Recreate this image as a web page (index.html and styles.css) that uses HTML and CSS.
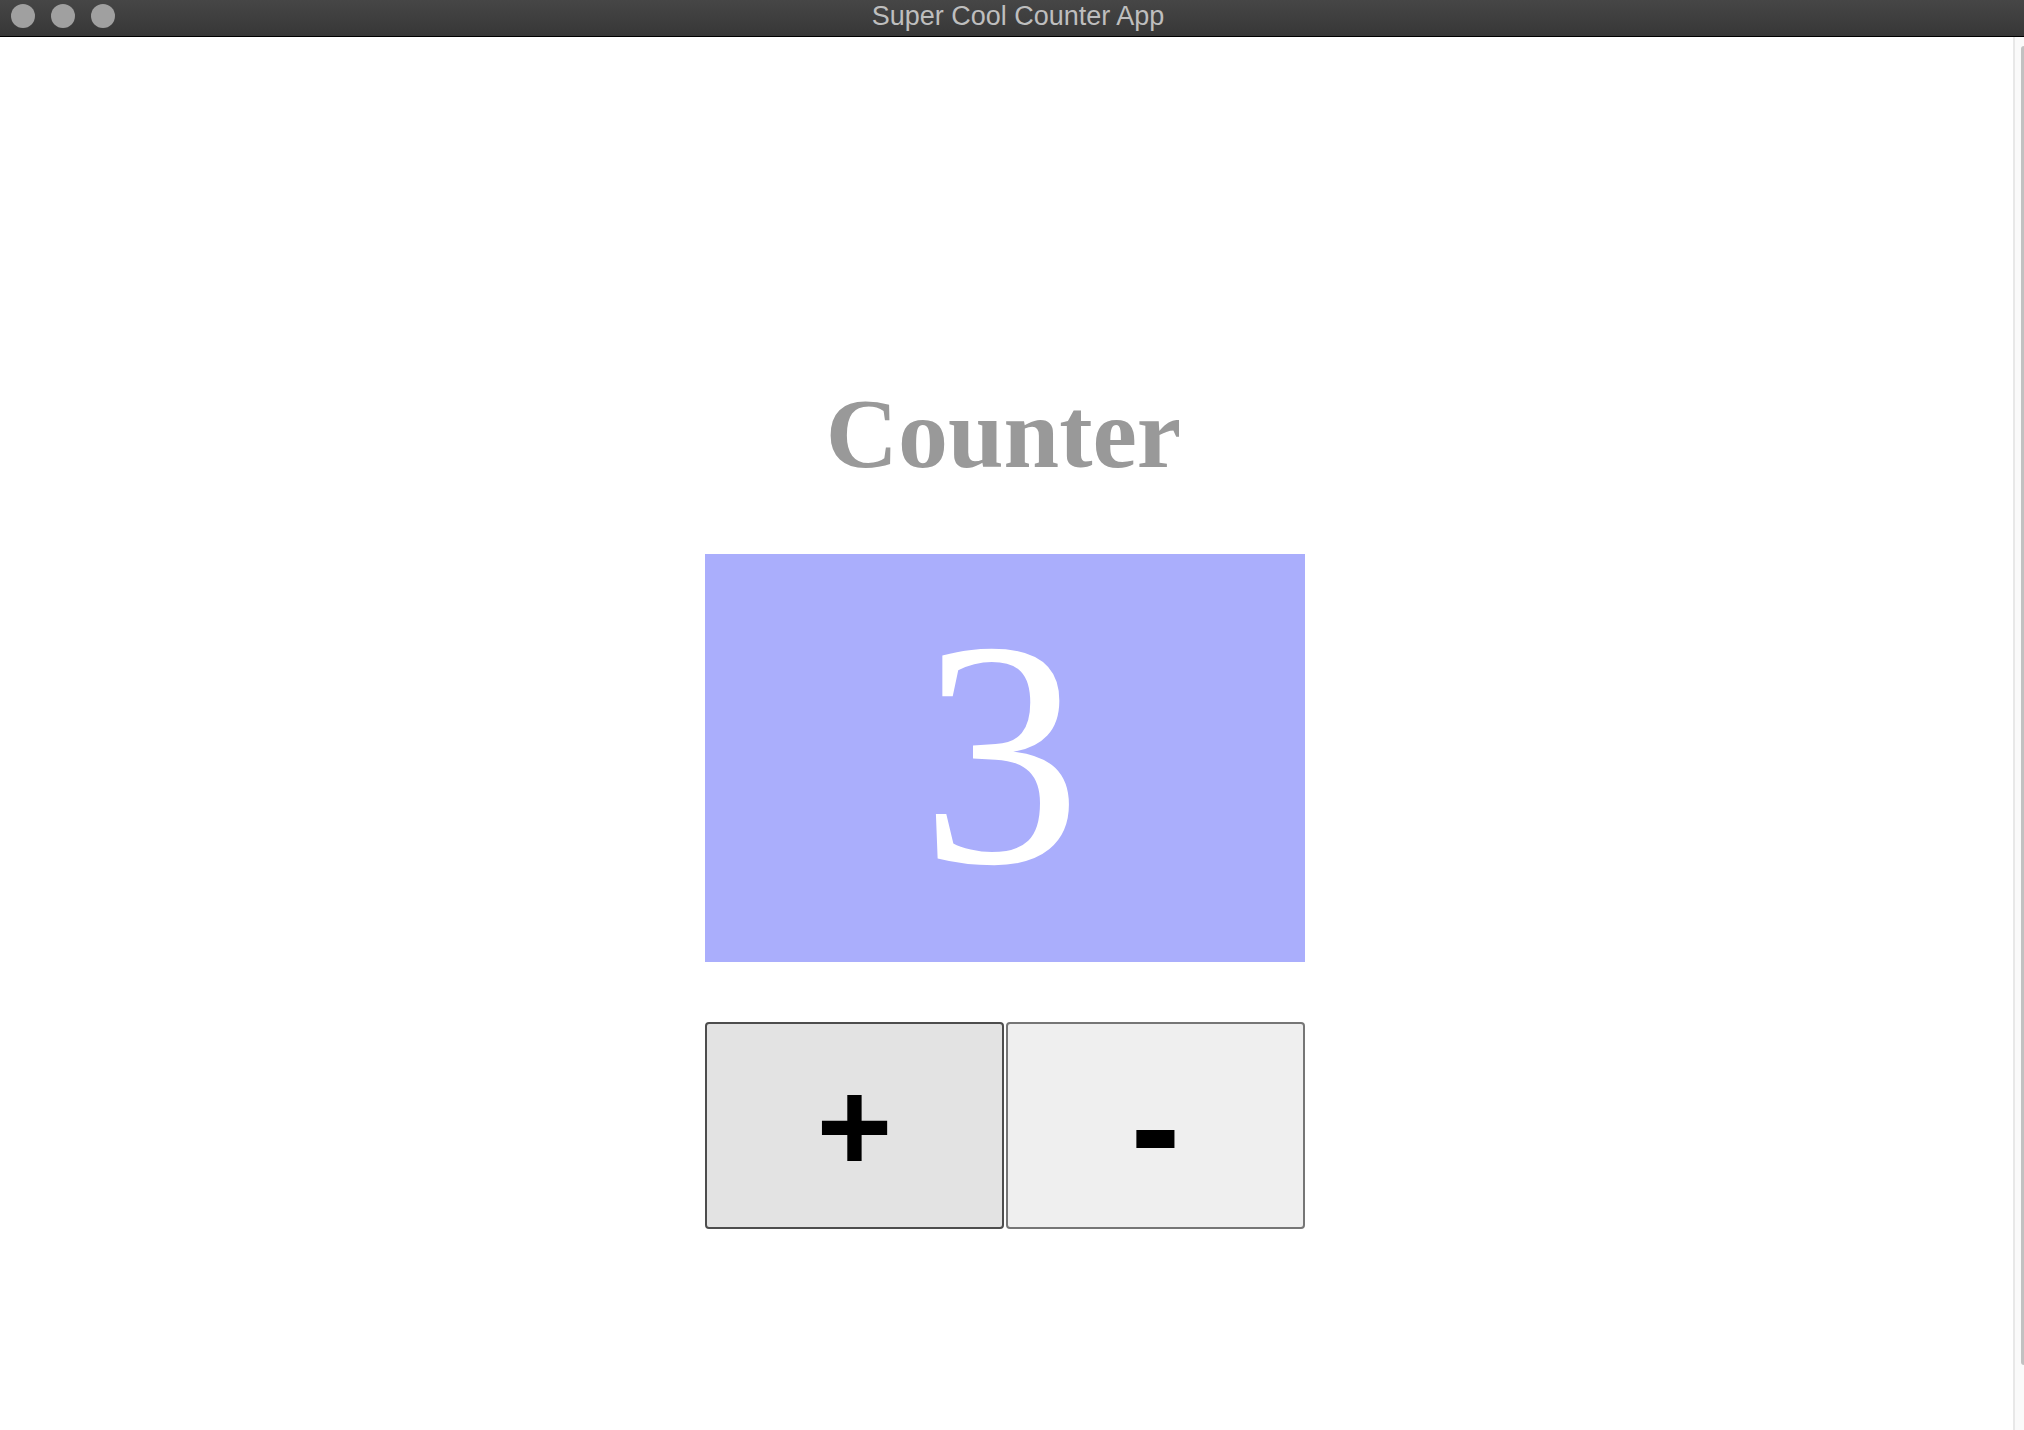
FILE: index.html
```html
<!DOCTYPE html>
<html lang="en">
<head>
<meta charset="utf-8">
<title>Super Cool Counter App</title>
<link rel="stylesheet" href="styles.css">
</head>
<body>
<div class="window">
  <header class="titlebar">
    <div class="lights">
      <span class="light"></span>
      <span class="light"></span>
      <span class="light"></span>
    </div>
    <div class="title">Super Cool Counter App</div>
  </header>
  <div class="viewport">
    <main class="content">
      <h1 class="heading">Counter</h1>
      <div class="counter">
        <div class="display">3</div>
        <div class="buttons">
          <button class="btn btn-active" type="button">+</button>
          <button class="btn btn-minus" type="button">-</button>
        </div>
      </div>
    </main>
    <div class="scrollbar"><div class="thumb"></div></div>
  </div>
</div>
</body>
</html>
```

FILE: styles.css
```css
html, body {
  margin: 0;
  padding: 0;
  background: #ffffff;
}
body {
  width: 2024px;
  height: 1430px;
  overflow: hidden;
}
.window {
  display: flex;
  flex-direction: column;
  height: 1430px;
}
.titlebar {
  position: relative;
  height: 36px;
  flex: 0 0 36px;
  background: linear-gradient(#464646, #373737);
  border-bottom: 1px solid #000;
  display: flex;
  align-items: center;
  justify-content: center;
}
.lights {
  position: absolute;
  left: 11px;
  top: 4px;
  display: flex;
  gap: 16px;
}
.light {
  width: 24px;
  height: 24px;
  border-radius: 50%;
  background: #a0a0a0;
}
.title {
  font-family: "Liberation Sans", Arial, sans-serif;
  font-size: 27px;
  color: #bebebe;
  padding-left: 12px;
  margin-top: -4px;
}
.viewport {
  flex: 1;
  display: flex;
}
.content {
  flex: 1;
  display: flex;
  flex-direction: column;
  align-items: center;
  padding-top: 347px;
  padding-right: 3px;
}
.heading {
  margin: 0;
  padding-right: 3px;
  text-align: center;
  font-family: "Liberation Serif", "Times New Roman", serif;
  font-weight: bold;
  font-size: 100px;
  line-height: 100px;
  color: #999999;
}
.counter {
  margin-top: 70px;
  width: 600px;
  display: flex;
  flex-direction: column;
  gap: 60px;
}
.display {
  height: 408px;
  box-sizing: border-box;
  background: #aaaefc;
  color: #ffffff;
  display: flex;
  align-items: center;
  justify-content: center;
  padding-right: 8px;
  padding-bottom: 8px;
  font-family: "Liberation Serif", "Times New Roman", serif;
  font-size: 322px;
  line-height: 1;
}
.buttons {
  display: flex;
  gap: 2px;
}
.btn {
  width: 299px;
  height: 207px;
  margin: 0;
  padding: 0;
  box-sizing: border-box;
  border: 2px solid #767676;
  border-radius: 4px;
  background: #efefef;
  color: #000;
  font-family: "Liberation Sans", Arial, sans-serif;
  font-weight: bold;
  font-size: 130px;
  line-height: 1;
}
.btn-active {
  border-color: #4d4d4d;
  background: #e3e3e3;
}
.btn-minus {
  font-size: 150px;
}
.scrollbar {
  width: 9px;
  flex: 0 0 9px;
  border-left: 2px solid #e8e8e8;
  background: #fafafa;
  padding-top: 9px;
}
.thumb {
  margin-left: 6px;
  height: 1319px;
  background: #c1c1c1;
  border-radius: 3px 0 0 3px;
}
```
